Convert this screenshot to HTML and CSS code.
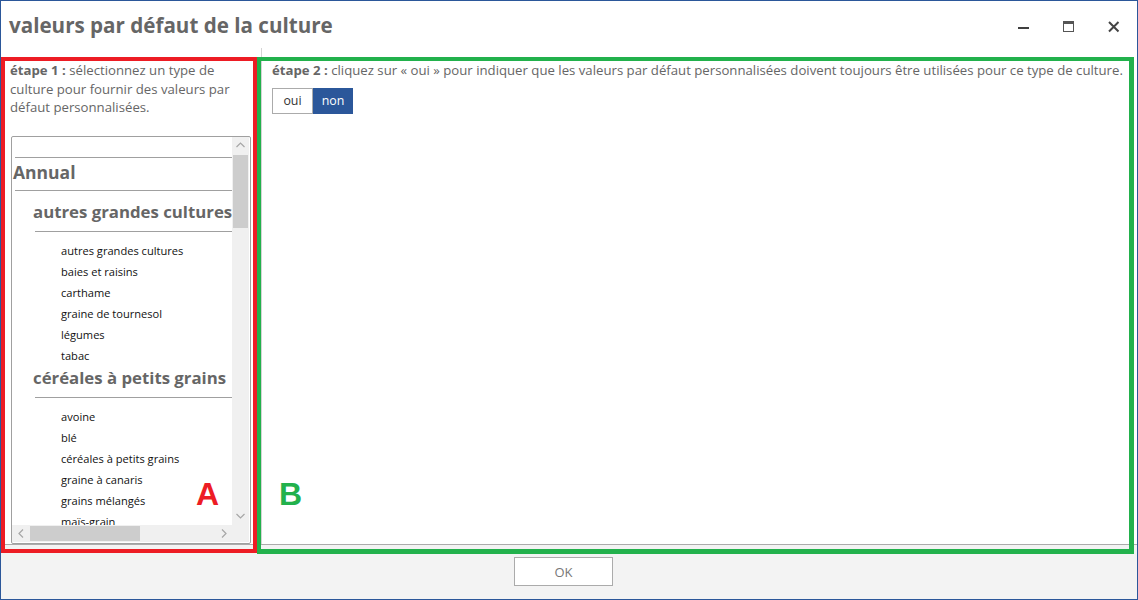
FILE: index.html
```html
<!DOCTYPE html>
<html lang="fr">
<head>
<meta charset="utf-8">
<title>valeurs par défaut de la culture</title>
<link rel="stylesheet" href="styles.css">
</head>
<body>
<div class="window">
  <header class="titlebar">
    <h1 class="title">valeurs par défaut de la culture</h1>
    <div class="controls">
      <span class="ctl"><svg width="12" height="12" viewBox="0 0 12 12"><rect x="0" y="6" width="11" height="2" fill="#3f3f3f"/></svg></span>
      <span class="ctl"><svg width="12" height="12" viewBox="0 0 12 12"><rect x="0.5" y="0.5" width="10" height="10" fill="none" stroke="#555" stroke-width="1"/><rect x="0" y="0" width="11" height="3" fill="#555"/></svg></span>
      <span class="ctl"><svg width="12" height="12" viewBox="0 0 12 12"><path d="M1 1 L10.5 10.5 M10.5 1 L1 10.5" stroke="#444" stroke-width="2" fill="none"/></svg></span>
    </div>
  </header>

  <main class="main">
    <section class="left">
      <p class="step"><b>étape 1 :</b> sélectionnez un type de culture pour fournir des valeurs par défaut personnalisées.</p>
      <div class="listbox">
        <div class="list">
          <div class="blank"></div>
          <div class="h-annual">Annual</div>
          <div class="h-group">autres grandes cultures</div>
          <ul class="items">
            <li>autres grandes cultures</li>
            <li>baies et raisins</li>
            <li>carthame</li>
            <li>graine de tournesol</li>
            <li>légumes</li>
            <li>tabac</li>
          </ul>
          <div class="h-group">céréales à petits grains</div>
          <ul class="items">
            <li>avoine</li>
            <li>blé</li>
            <li>céréales à petits grains</li>
            <li>graine à canaris</li>
            <li>grains mélangés</li>
            <li>maïs-grain</li>
          </ul>
        </div>
        <div class="vscroll">
          <span class="arrow"><svg width="9" height="6" viewBox="0 0 9 6"><polyline points="0.5,5 4.5,1 8.5,5" fill="none" stroke="#a6a6a6" stroke-width="1.2"/></svg></span>
          <span class="vthumb"></span>
          <span class="spacer"></span>
          <span class="arrow"><svg width="9" height="6" viewBox="0 0 9 6"><polyline points="0.5,1 4.5,5 8.5,1" fill="none" stroke="#a6a6a6" stroke-width="1.2"/></svg></span>
        </div>
        <div class="hscroll">
          <span class="arrow"><svg width="6" height="9" viewBox="0 0 6 9"><polyline points="5,0.5 1,4.5 5,8.5" fill="none" stroke="#a6a6a6" stroke-width="1.2"/></svg></span>
          <span class="hthumb"></span>
          <span class="spacer"></span>
          <span class="arrow"><svg width="6" height="9" viewBox="0 0 6 9"><polyline points="1,0.5 5,4.5 1,8.5" fill="none" stroke="#a6a6a6" stroke-width="1.2"/></svg></span>
        </div>
        <div class="corner"></div>
      </div>
    </section>
    <section class="right">
      <p class="step"><b>étape 2 :</b> cliquez sur « oui » pour indiquer que les valeurs par défaut personnalisées doivent toujours être utilisées pour ce type de culture.</p>
      <div class="toggle">
        <button class="opt">oui</button>
        <button class="opt on">non</button>
      </div>
    </section>
  </main>

  <footer class="footer">
    <button class="ok">OK</button>
  </footer>

  <div class="mark mark-a"></div>
  <div class="mark mark-b"></div>
  <span class="label label-a">A</span>
  <span class="label label-b">B</span>
</div>
</body>
</html>
```

FILE: styles.css
```css
* { box-sizing: border-box; }

html, body {
  margin: 0;
  padding: 0;
  background: #fff;
}

body {
  font-family: "Open Sans", "Noto Sans", sans-serif;
  color: #666;
}

.window {
  position: relative;
  width: 1138px;
  height: 600px;
  border: 1px solid #2b579a;
  display: flex;
  flex-direction: column;
  background: #fff;
  overflow: hidden;
}

/* title bar */
.titlebar {
  height: 47px;
  display: flex;
  align-items: flex-start;
  flex: none;
}

.title {
  margin: 0;
  padding: 9px 0 0 8px;
  font-size: 20.6px;
  font-weight: 700;
  line-height: 30px;
  color: #666;
}

.controls {
  margin-left: auto;
  display: flex;
  padding-right: 1px;
}

.ctl {
  width: 45px;
  height: 47px;
  display: flex;
  align-items: center;
  justify-content: center;
  padding-top: 4px;
}

.ctl svg { display: block; }

/* main area */
.main {
  flex: none;
  height: 497px;
  border-bottom: 1px solid #ababab;
  display: flex;
}

.left {
  width: 261px;
  flex: none;
  border-right: 1px solid #d4d4d4;
  padding: 13px 0 0 9px;
}

.step {
  margin: 0;
  font-size: 13.2px;
  line-height: 18.5px;
  color: #666;
}

.step b { font-weight: 700; }

.left .step { padding-right: 14px; }

/* list box */
.listbox {
  margin: 19px 0 0 1px;
  width: 240px;
  height: 408px;
  border: 1px solid #a0a0a0;
  border-radius: 2px;
  display: grid;
  grid-template-columns: 220px 17px;
  grid-template-rows: 388px 17px;
  overflow: hidden;
}

.list {
  overflow: hidden;
  white-space: nowrap;
}

.blank {
  height: 21px;
  margin-left: 3px;
  border-bottom: 1px solid #a0a0a0;
}

.h-annual {
  margin-left: 3px;
  padding: 2px 0 6px 0;
  text-indent: -2px;
  font-size: 17.5px;
  line-height: 24px;
  font-weight: 700;
  color: #666;
  border-bottom: 1px solid #a0a0a0;
}

.h-group {
  margin-left: 23px;
  padding: 9px 0 7px 0;
  text-indent: -2px;
  font-size: 16.8px;
  line-height: 24px;
  font-weight: 700;
  color: #666;
  border-bottom: 1px solid #a0a0a0;
}

.items + .h-group { padding-top: 0; }

.items {
  list-style: none;
  margin: 0;
  padding: 8px 0 0 49px;
  font-size: 11.1px;
  line-height: 21px;
  color: #111;
}

.vscroll {
  background: #f0f0f0;
  display: flex;
  flex-direction: column;
}

.hscroll {
  background: #f0f0f0;
  display: flex;
}

.arrow {
  flex: none;
  width: 17px;
  height: 17px;
  display: flex;
  align-items: center;
  justify-content: center;
}

.vthumb {
  flex: none;
  height: 73px;
  margin: 1px 1px 0 1px;
  background: #cdcdcd;
}

.hthumb {
  flex: none;
  width: 110px;
  margin: 1px 0 1px 1px;
  background: #cdcdcd;
}

.spacer { flex: 1; }

.corner { background: #f0f0f0; }

/* right */
.right {
  flex: 1;
  padding: 13px 0 0 10px;
}

.toggle {
  display: flex;
  margin-top: 8px;
}

.opt {
  width: 41px;
  height: 26px;
  margin: 0;
  border: 1px solid #ababab;
  background: #fff;
  font-family: "Open Sans", sans-serif;
  font-size: 12.4px;
  color: #333;
  padding: 0;
}

.opt.on {
  width: 40px;
  border-color: #2b579a;
  background: #2b579a;
  color: #fff;
}

/* footer */
.footer {
  flex: 1;
  background: #f3f3f3;
  display: flex;
  justify-content: center;
  align-items: flex-start;
  padding: 12px 11px 0 0;
}

.ok {
  width: 99px;
  height: 29px;
  margin: 0;
  border: 1px solid #ababab;
  background: #fff;
  font-family: "Open Sans", sans-serif;
  font-size: 13px;
  color: #777;
}

/* annotations (overlay) */
.mark {
  position: absolute;
  border-style: solid;
  border-width: 4px;
}

.mark-a {
  left: 0;
  top: 56px;
  width: 256px;
  height: 496px;
  border-color: #ed1c24;
}

.mark-b {
  left: 256px;
  top: 56px;
  width: 877px;
  height: 497px;
  border-color: #22b14c;
  border-width: 4px 5px 5px 4px;
}

.label {
  position: absolute;
  font-family: "Liberation Sans", Arial, sans-serif;
  font-weight: 700;
  font-size: 32px;
  line-height: 32px;
}

.label-a { left: 195px; top: 477px; color: #ed1c24; }
.label-b { left: 278px; top: 477px; color: #22b14c; }
```
